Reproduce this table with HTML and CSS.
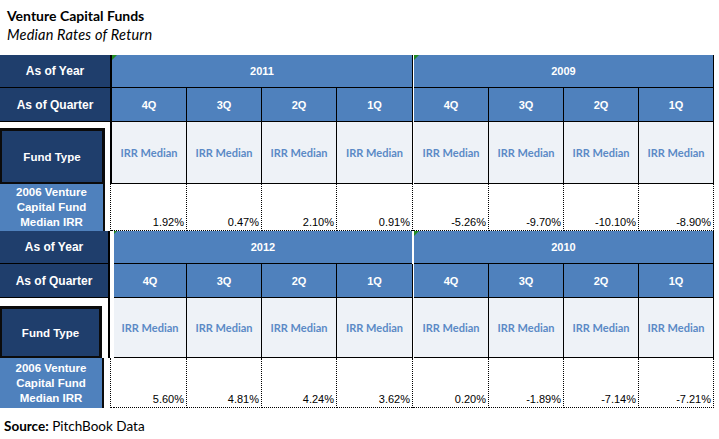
FILE: index.html
```html
<!DOCTYPE html>
<html>
<head>
<meta charset="utf-8">
<link rel="stylesheet" href="styles.css">
</head>
<body>
<div class="page">
  <div class="head">
    <div class="title">Venture Capital Funds</div>
    <div class="subtitle">Median Rates of Return</div>
  </div>

  <div class="grid top">
    <div class="lbl">As of Year</div>
    <div class="vl"></div>
    <div class="year tri">2011</div>
    <div class="sep"></div>
    <div class="year tri end">2009</div>

    <div class="lbl">As of Quarter</div>
    <div class="vl"></div>
    <div class="q">4Q</div><div class="q">3Q</div><div class="q">2Q</div><div class="q b4">1Q</div>
    <div class="sep"></div>
    <div class="q">4Q</div><div class="q">3Q</div><div class="q">2Q</div><div class="q">1Q</div>

    <div class="ftcell"><div class="ftbox">Fund Type</div></div>
    <div class="vl"></div>
    <div class="irr">IRR Median</div><div class="irr">IRR Median</div><div class="irr">IRR Median</div><div class="irr b4">IRR Median</div>
    <div class="sep"></div>
    <div class="irr">IRR Median</div><div class="irr">IRR Median</div><div class="irr">IRR Median</div><div class="irr">IRR Median</div>

    <div class="dlcell"><div class="dlbox">2006 Venture<br>Capital Fund<br>Median IRR</div></div>
    <div class="vld"></div>
    <div class="val">1.92%</div><div class="val">0.47%</div><div class="val">2.10%</div><div class="val b4">0.91%</div>
    <div class="sepd"></div>
    <div class="val">-5.26%</div><div class="val">-9.70%</div><div class="val">-10.10%</div><div class="val">-8.90%</div>
  </div>

  <div class="grid bottom">
    <div class="lbl">As of Year</div>
    <div class="vl"></div>
    <div class="year tri tri-s">2012</div>
    <div class="sepw"></div>
    <div class="year tri end">2010</div>

    <div class="lbl">As of Quarter</div>
    <div class="vl"></div>
    <div class="q">4Q</div><div class="q">3Q</div><div class="q">2Q</div><div class="q b4">1Q</div>
    <div class="sep"></div>
    <div class="q">4Q</div><div class="q">3Q</div><div class="q">2Q</div><div class="q">1Q</div>

    <div class="ftcell"><div class="ftbox">Fund Type</div></div>
    <div class="vl"></div>
    <div class="irr">IRR Median</div><div class="irr">IRR Median</div><div class="irr">IRR Median</div><div class="irr b4">IRR Median</div>
    <div class="sep"></div>
    <div class="irr">IRR Median</div><div class="irr">IRR Median</div><div class="irr">IRR Median</div><div class="irr">IRR Median</div>

    <div class="dlcell"><div class="dlbox">2006 Venture<br>Capital Fund<br>Median IRR</div></div>
    <div class="vld"></div>
    <div class="val">5.60%</div><div class="val">4.81%</div><div class="val">4.24%</div><div class="val b4">3.62%</div>
    <div class="sepd"></div>
    <div class="val">0.20%</div><div class="val">-1.89%</div><div class="val">-7.14%</div><div class="val">-7.21%</div>
  </div>

  <div class="source"><b>Source:</b> PitchBook Data</div>
</div>
</body>
</html>
```

FILE: styles.css
```css
* { box-sizing: border-box; }
html, body { margin: 0; padding: 0; background: #fff; }
body { font-family: "Liberation Sans", Arial, sans-serif; color: #000; }

.page { width: 719px; height: 439px; overflow: hidden; }

.head { height: 55px; padding: 7px 0 0 7px; font-family: Lato, "Liberation Sans", sans-serif; }
.title { font-weight: 700; font-size: 14px; line-height: 18px; letter-spacing: 0; }
.subtitle { font-style: italic; font-size: 14.5px; line-height: 20px; letter-spacing: 0.2px; }

.grid { display: grid; width: 714px; }
.grid.top {
  grid-template-columns: 110px 2px 75px 75px 75px 75px 2px 75px 75px 75px 75px;
  grid-template-rows: 33px 34px 62px 47px;
}
.grid.bottom {
  grid-template-columns: 108px 6px 73px 75px 75px 75px 2px 75px 75px 75px 75px;
  grid-template-rows: 33px 34px 60px 50px;
}

.lbl {
  background: #1f3e6c;
  color: #fff;
  font-weight: 700;
  font-size: 12px;
  display: flex; align-items: center; justify-content: center;
  border-bottom: 1px solid #000;
}

.vl { background: #fff; border-left: 2px solid #000; }
.vld { background: #fff; border-left: 1px dotted #000; border-bottom: 1px dotted #000; }
.bottom .vld { margin-left: 2px; }

.sep { background: #fff; border-left: 1px solid #000; }
.sepw { background: #fff; }
.sepd { background: #fff; border-left: 1px dotted #000; border-bottom: 1px dotted #000; }

.year {
  grid-column: span 4;
  background: #4f81bd;
  color: #fff;
  font-weight: 700;
  font-size: 11px;
  display: flex; align-items: center; justify-content: center;
  border-bottom: 1px solid #000;
}
.year.end { border-right: 1px solid #000; }

.tri { position: relative; }
.tri::before {
  content: "";
  position: absolute; top: 0; left: 0;
  border-top: 5px solid #228b22;
  border-right: 5px solid transparent;
}
.tri-s::before { border-top-width: 3px; border-right-width: 3px; left: 0; }

.q {
  background: #4f81bd;
  color: #fff;
  font-weight: 700;
  font-size: 11px;
  display: flex; align-items: center; justify-content: center;
  border-right: 1px solid #000;
  border-bottom: 1px solid #000;
}
.q.b4 { border-right: none; }

.ftcell { background: #fff; }
.ftbox {
  margin-top: 6px;
  width: 105px; height: 56px;
  background: #1f3e6c;
  border: 2px solid #0b0b0b;
  border-top-width: 3px;
  border-right-width: 3px;
  color: #fff;
  font-weight: 700;
  font-size: 11.5px;
  display: flex; align-items: center; justify-content: center;
}
.bottom .ftbox { margin-top: 8px; width: 102px; height: 52px; }

.irr {
  background: #eef2f7;
  color: #5b8ac6;
  font-family: Lato, "Liberation Sans", sans-serif;
  font-weight: 700;
  font-size: 11px;
  display: flex; align-items: center; justify-content: center;
  border-right: 1px solid #000;
  border-bottom: 1px solid #000;
}
.irr.b4 { border-right: none; }

.dlcell { background: #fff; }
.dlbox {
  width: 105px; height: 100%;
  background: #4f81bd;
  border-right: 2px solid #0b0b0b;
  color: #fff;
  font-weight: 700;
  font-size: 11.5px;
  line-height: 15px;
  text-align: center;
  display: flex; align-items: center; justify-content: center;
}
.bottom .dlbox { width: 104px; }

.val {
  background: #fff;
  font-size: 11px;
  display: flex; align-items: flex-end; justify-content: flex-end;
  padding: 0 2px 2px 0;
  border-right: 1px dotted #000;
  border-bottom: 1px dotted #000;
}
.val.b4 { border-right: none; }

.source {
  padding: 9px 0 0 4px;
  font-family: Lato, "Liberation Sans", sans-serif;
  font-size: 13.5px;
  line-height: 18px;
}
.source b { font-weight: 700; }
```
